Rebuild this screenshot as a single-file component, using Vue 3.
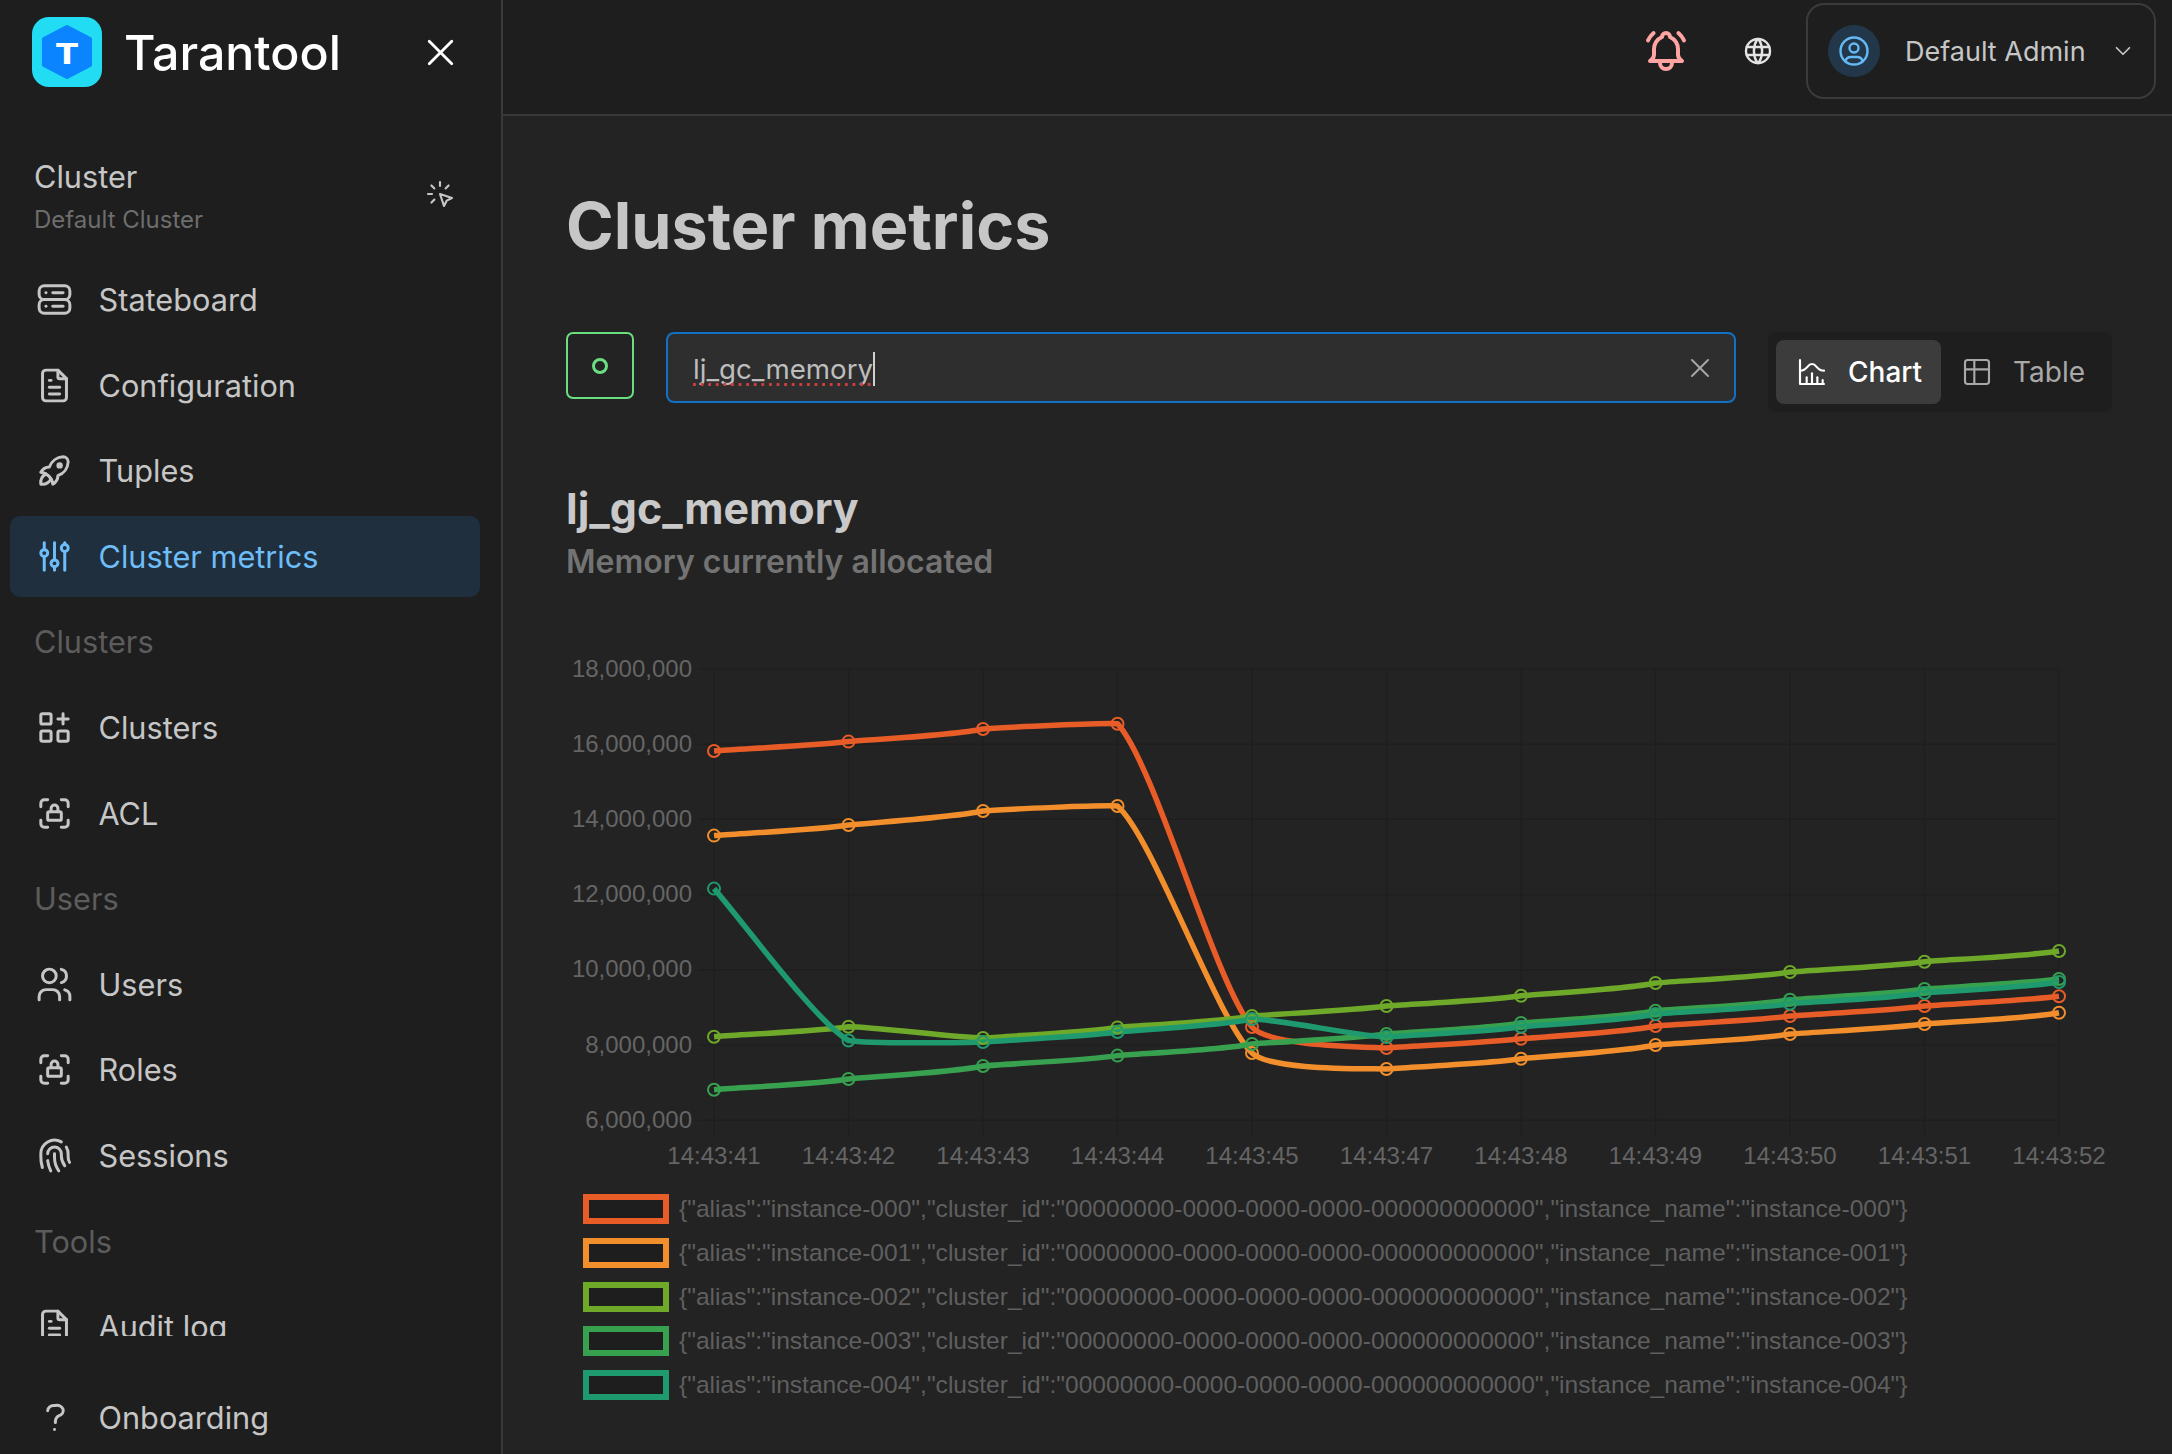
<template>
  <div class="app">
    <aside class="sidebar">
      <div class="brand">
        <svg class="logo" viewBox="0 0 70 70">
          <rect width="70" height="70" rx="17" fill="#21dcf2" />
          <polygon points="35,10 58,22 58,48 35,60 12,48 12,22" fill="#0a84ff" stroke="#0a84ff" stroke-width="4" stroke-linejoin="round" />
          <text x="35" y="47" text-anchor="middle" class="logo-t" textLength="24" lengthAdjust="spacingAndGlyphs">T</text>
        </svg>
        <span class="brand-name">Tarantool</span>
        <svg class="ico brand-x" viewBox="0 0 24 24"><path v-for="d in icons.x" :key="d" :d="d" /></svg>
      </div>

      <div class="cluster">
        <div>
          <div class="cluster-name">Cluster</div>
          <div class="cluster-sub">Default Cluster</div>
        </div>
        <svg class="ico cluster-ico" viewBox="0 0 24 24"><path v-for="d in icons.click" :key="d" :d="d" /></svg>
      </div>

      <nav class="nav">
        <template v-for="item in nav" :key="item.label + item.icon">
          <div v-if="!item.icon" class="nav-head">{{ item.label }}</div>
          <a v-else class="nav-item" :class="{ active: item.active }">
            <svg class="ico nav-ico" viewBox="0 0 24 24"><path v-for="d in icons[item.icon]" :key="d" :d="d" /></svg>
            <span>{{ item.label }}</span>
          </a>
        </template>
      </nav>

      <div class="side-foot">
        <a class="nav-item">
          <svg class="ico nav-ico" viewBox="0 0 24 24"><path v-for="d in icons.help" :key="d" :d="d" /></svg>
          <span>Onboarding</span>
        </a>
      </div>
    </aside>

    <div class="main">
      <header class="topbar">
        <svg class="ico bell" viewBox="0 0 24 24"><path v-for="d in icons.bell" :key="d" :d="d" /></svg>
        <svg class="ico globe" viewBox="0 0 24 24"><path v-for="d in icons.world" :key="d" :d="d" /></svg>
        <div class="user">
          <span class="avatar">
            <svg class="ico" viewBox="0 0 24 24"><path v-for="d in icons.user" :key="d" :d="d" /></svg>
          </span>
          <span class="user-name">Default Admin</span>
          <svg class="ico chev" viewBox="0 0 24 24"><path d="M6 9l6 6l6 -6" /></svg>
        </div>
      </header>

      <main class="content">
        <h1 class="title">Cluster metrics</h1>

        <div class="toolbar">
          <div class="status"><i></i></div>
          <div class="search">
            <span class="search-text">lj_gc_memory</span>
            <svg class="ico search-x" viewBox="0 0 24 24"><path v-for="d in icons.x" :key="d" :d="d" /></svg>
          </div>
          <div class="switch">
            <button class="switch-btn on">
              <svg class="ico" viewBox="0 0 24 24"><path v-for="d in icons.histogram" :key="d" :d="d" /></svg>
              Chart
            </button>
            <button class="switch-btn">
              <svg class="ico" viewBox="0 0 24 24"><path v-for="d in icons.table" :key="d" :d="d" /></svg>
              Table
            </button>
          </div>
        </div>

        <h2 class="metric">lj_gc_memory</h2>
        <div class="metric-sub">Memory currently allocated</div>

        <svg class="chart" viewBox="566 640 1540 540">
          <g class="grid">
            <line v-for="t in yTicks" :key="t.label" x1="699" :x2="xAt(10)" :y1="t.y" :y2="t.y" />
            <line v-for="(t, i) in times" :key="t" :x1="xAt(i)" :x2="xAt(i)" y1="669" y2="1136" />
          </g>
          <g class="labels">
            <text v-for="t in yTicks" :key="t.label" x="692" :y="t.y - 1" text-anchor="end">{{ t.label }}</text>
            <text v-for="(t, i) in times" :key="t" :x="xAt(i)" y="1155" text-anchor="middle">{{ t }}</text>
          </g>
          <g v-for="s in lines" :key="s.name">
            <path :d="s.d" :stroke="s.color" class="line" />
          </g>
          <g v-for="s in lines" :key="s.name">
            <circle v-for="(y, i) in s.ys" :key="i" :cx="xAt(i)" :cy="y" r="6" :stroke="s.color" class="dot" />
          </g>
        </svg>

        <ul class="legend">
          <li v-for="s in series" :key="s.name">
            <i :style="{ borderColor: s.color }"></i>
            <span>{"alias":"{{ s.name }}","cluster_id":"00000000-0000-0000-0000-000000000000","instance_name":"{{ s.name }}"}</span>
          </li>
        </ul>
      </main>
    </div>
  </div>
</template>

<script setup>
const icons = {
  x: ['M18 6l-12 12', 'M6 6l12 12'],
  click: ['M3 12l3 0', 'M12 3l0 3', 'M7.8 7.8l-2.2 -2.2', 'M16.2 7.8l2.2 -2.2', 'M7.8 16.2l-2.2 2.2', 'M12 12l9 3l-4 2l-2 4l-3 -9'],
  server: ['M3 7a3 3 0 0 1 3 -3h12a3 3 0 0 1 3 3v2a3 3 0 0 1 -3 3h-12a3 3 0 0 1 -3 -3z', 'M3 15a3 3 0 0 1 3 -3h12a3 3 0 0 1 3 3v2a3 3 0 0 1 -3 3h-12a3 3 0 0 1 -3 -3z', 'M7 8h.01', 'M7 16h.01', 'M11 8h6', 'M11 16h6'],
  file: ['M14 3v4a1 1 0 0 0 1 1h4', 'M17 21h-10a2 2 0 0 1 -2 -2v-14a2 2 0 0 1 2 -2h7l5 5v11a2 2 0 0 1 -2 2z', 'M9 9h1', 'M9 13h6', 'M9 17h6'],
  rocket: ['M4 13a8 8 0 0 1 7 7a6 6 0 0 0 3 -5a9 9 0 0 0 6 -8a3 3 0 0 0 -3 -3a9 9 0 0 0 -8 6a6 6 0 0 0 -5 3', 'M7 14a6 6 0 0 0 -3 6a6 6 0 0 0 6 -3', 'M14 9a1 1 0 1 0 2 0a1 1 0 1 0 -2 0'],
  sliders: ['M4 10a2 2 0 1 0 4 0a2 2 0 0 0 -4 0', 'M6 4v4', 'M6 12v8', 'M10 16a2 2 0 1 0 4 0a2 2 0 0 0 -4 0', 'M12 4v10', 'M12 18v2', 'M16 7a2 2 0 1 0 4 0a2 2 0 0 0 -4 0', 'M18 4v1', 'M18 9v11'],
  apps: ['M4 5a1 1 0 0 1 1 -1h4a1 1 0 0 1 1 1v4a1 1 0 0 1 -1 1h-4a1 1 0 0 1 -1 -1z', 'M4 15a1 1 0 0 1 1 -1h4a1 1 0 0 1 1 1v4a1 1 0 0 1 -1 1h-4a1 1 0 0 1 -1 -1z', 'M14 15a1 1 0 0 1 1 -1h4a1 1 0 0 1 1 1v4a1 1 0 0 1 -1 1h-4a1 1 0 0 1 -1 -1z', 'M14 7l6 0', 'M17 4l0 6'],
  lock: ['M4 8v-2a2 2 0 0 1 2 -2h2', 'M4 16v2a2 2 0 0 0 2 2h2', 'M16 4h2a2 2 0 0 1 2 2v2', 'M16 20h2a2 2 0 0 0 2 -2v-2', 'M8 12a1 1 0 0 1 1 -1h6a1 1 0 0 1 1 1v3a1 1 0 0 1 -1 1h-6a1 1 0 0 1 -1 -1z', 'M10 11v-2a2 2 0 1 1 4 0v2'],
  users: ['M5 7a4 4 0 1 0 8 0a4 4 0 1 0 -8 0', 'M3 21v-2a4 4 0 0 1 4 -4h4a4 4 0 0 1 4 4v2', 'M16 3.13a4 4 0 0 1 0 7.75', 'M21 21v-2a4 4 0 0 0 -3 -3.85'],
  finger: ['M18.9 7a8 8 0 0 1 1.1 5v1a6 6 0 0 0 .8 3', 'M8 11a4 4 0 0 1 8 0v1a10 10 0 0 0 2 6', 'M12 11v2a14 14 0 0 0 2.5 8', 'M8 15a18 18 0 0 0 1.8 6', 'M4.9 19a22 22 0 0 1 -.9 -7v-1a8 8 0 0 1 12 -6.95'],
  help: ['M8 8a3.5 3 0 0 1 3.5 -3h1a3.5 3 0 0 1 2 6a3 4 0 0 0 -2 4', 'M12 19l0 .01'],
  bell: ['M10 5a2 2 0 0 1 4 0a7 7 0 0 1 4 6v3a4 4 0 0 0 2 3h-16a4 4 0 0 0 2 -3v-3a7 7 0 0 1 4 -6', 'M9 17v1a3 3 0 0 0 6 0v-1', 'M21 6.727a11.05 11.05 0 0 0 -2.794 -3.727', 'M3 6.727a11.05 11.05 0 0 1 2.792 -3.727'],
  world: ['M3 12a9 9 0 1 0 18 0a9 9 0 0 0 -18 0', 'M3.6 9h16.8', 'M3.6 15h16.8', 'M11.5 3a17 17 0 0 0 0 18', 'M12.5 3a17 17 0 0 1 0 18'],
  user: ['M3 12a9 9 0 1 0 18 0a9 9 0 1 0 -18 0', 'M9 10a3 3 0 1 0 6 0a3 3 0 1 0 -6 0', 'M6.168 18.849a4 4 0 0 1 3.832 -2.849h4a4 4 0 0 1 3.834 2.855'],
  histogram: ['M3 3v18h18', 'M20 18v3', 'M16 16v5', 'M12 13v8', 'M8 16v5', 'M3 11c6 0 5 -5 9 -5s3 5 9 5'],
  table: ['M3 5a2 2 0 0 1 2 -2h14a2 2 0 0 1 2 2v14a2 2 0 0 1 -2 2h-14a2 2 0 0 1 -2 -2v-14z', 'M3 10h18', 'M10 3v18'],
}

const nav = [
  { label: 'Stateboard', icon: 'server' },
  { label: 'Configuration', icon: 'file' },
  { label: 'Tuples', icon: 'rocket' },
  { label: 'Cluster metrics', icon: 'sliders', active: true },
  { label: 'Clusters' },
  { label: 'Clusters', icon: 'apps' },
  { label: 'ACL', icon: 'lock' },
  { label: 'Users' },
  { label: 'Users', icon: 'users' },
  { label: 'Roles', icon: 'lock' },
  { label: 'Sessions', icon: 'finger' },
  { label: 'Tools' },
  { label: 'Audit log', icon: 'file' },
]

const times = ['14:43:41', '14:43:42', '14:43:43', '14:43:44', '14:43:45', '14:43:47', '14:43:48', '14:43:49', '14:43:50', '14:43:51', '14:43:52']

const yTicks = ['18,000,000', '16,000,000', '14,000,000', '12,000,000', '10,000,000', '8,000,000', '6,000,000'].map((label, i) => ({
  label,
  y: 669 + i * 75.2,
}))

const xAt = (i) => 714 + i * 134.5

// y values are pixels of the plot, read off the chart
const series = [
  { name: 'instance-000', color: '#e85c27', ys: [751, 741.6, 729, 723.7, 1027, 1048, 1038.7, 1026, 1016, 1006, 996.3] },
  { name: 'instance-001', color: '#f28f2c', ys: [835.6, 825, 811, 806, 1053, 1069, 1058.7, 1045, 1034, 1024, 1012.7] },
  { name: 'instance-002', color: '#6ea92a', ys: [1036.7, 1026.7, 1038, 1027.4, 1016, 1006, 995.7, 983, 972, 961.7, 951] },
  { name: 'instance-003', color: '#38a14f', ys: [1089.7, 1079, 1066, 1055.6, 1044, 1034, 1023, 1010.7, 999.7, 989, 979] },
  { name: 'instance-004', color: '#1f9a6e', ys: [888.6, 1040.5, 1042, 1032, 1019, 1037, 1026.7, 1014, 1003.7, 993, 982] },
]

const clamp = (v, a, b) => Math.min(Math.max(v, Math.min(a, b)), Math.max(a, b))

function smoothPath(ys) {
  const pts = ys.map((y, i) => [xAt(i), y])
  const k = 0.2
  const cps = pts.map((p, i) => {
    const prev = pts[i - 1] || p
    const next = pts[i + 1] || p
    const lenP = Math.hypot(p[0] - prev[0], p[1] - prev[1])
    const lenN = Math.hypot(next[0] - p[0], next[1] - p[1])
    const r = lenN / (lenP + lenN)
    const vx = (next[0] - prev[0]) * k
    const vy = (next[1] - prev[1]) * k
    return {
      in: [clamp(p[0] - vx * (1 - r), prev[0], p[0]), clamp(p[1] - vy * (1 - r), prev[1] - 6, p[1] + 6)],
      out: [clamp(p[0] + vx * r, p[0], next[0]), clamp(p[1] + vy * r, p[1] - 2, next[1] + 2)],
    }
  })
  let d = `M${pts[0][0]} ${pts[0][1]}`
  for (let i = 1; i < pts.length; i++) {
    const a = cps[i - 1].out
    const b = cps[i].in
    d += `C${a[0].toFixed(1)} ${a[1].toFixed(1)} ${b[0].toFixed(1)} ${b[1].toFixed(1)} ${pts[i][0]} ${pts[i][1]}`
  }
  return d
}

const lines = series.map((s) => ({ ...s, d: smoothPath(s.ys) }))
</script>

<style scoped>
.app {
  display: flex;
  width: 2172px;
  height: 1454px;
  overflow: hidden;
  background: #232323;
  color: #c6c6c6;
  font-family: Inter, "Noto Sans", sans-serif;
}

.ico {
  fill: none;
  stroke: currentColor;
  stroke-width: 1.6;
  stroke-linecap: round;
  stroke-linejoin: round;
  flex: none;
}

.sidebar {
  width: 503px;
  flex: none;
  box-sizing: border-box;
  display: flex;
  flex-direction: column;
  background: #1e1e1e;
  border-right: 2px solid #393939;
}

.brand {
  height: 104px;
  flex: none;
  display: flex;
  align-items: center;
  padding-left: 32px;
}
.logo {
  width: 70px;
  height: 70px;
  flex: none;
}
.logo-t {
  font: 800 29px Inter, sans-serif;
  fill: #fff;
}
.brand-name {
  margin-left: 22px;
  font-size: 48.3px;
  font-weight: 500;
  color: #fff;
}
.brand-x {
  width: 45px;
  height: 45px;
  margin-left: auto;
  margin-right: 38px;
  color: #fff;
  stroke-width: 1.5;
}

.cluster {
  height: 155px;
  flex: none;
  box-sizing: border-box;
  display: flex;
  align-items: center;
  justify-content: space-between;
  padding: 28px 45px 0 34px;
}
.cluster-name {
  font-size: 30.7px;
  line-height: 44px;
}
.cluster-sub {
  font-size: 24px;
  line-height: 34px;
  margin-top: 4px;
  color: #6d6d6d;
}
.cluster-ico {
  width: 32px;
  height: 32px;
  margin-top: -4px;
}

.nav {
  height: 1077px;
  flex: none;
  overflow: hidden;
  display: flex;
  flex-direction: column;
  gap: 4.6px;
}
.nav-head {
  height: 81px;
  flex: none;
  padding-left: 34px;
  display: flex;
  align-items: center;
  font-size: 30.7px;
  color: #5c5c5c;
}
.nav-item {
  height: 81px;
  flex: none;
  margin: 0 21px 0 10px;
  padding-left: 23.5px;
  display: flex;
  align-items: center;
  gap: 24px;
  border-radius: 10px;
  font-size: 30.7px;
}
.nav-item.active {
  background: #1f2f3d;
  color: #6ebdf8;
}
.nav-ico {
  width: 41px;
  height: 41px;
  stroke-width: 1.75;
}
.side-foot {
  flex: none;
  height: 118px;
  padding-top: 40.5px;
  box-sizing: border-box;
}

.main {
  flex: 1;
  min-width: 0;
  display: flex;
  flex-direction: column;
}

.topbar {
  height: 116px;
  box-sizing: border-box;
  flex: none;
  display: flex;
  align-items: flex-start;
  justify-content: flex-end;
  padding: 3px 16px 0 0;
  background: #1e1e1e;
  border-bottom: 2px solid #393939;
}
.bell {
  width: 48px;
  height: 48px;
  margin-top: 24px;
  color: #ffa3a3;
  stroke-width: 2;
}
.globe {
  width: 32px;
  height: 32px;
  margin: 32px 32px 0 52px;
  color: #e4e4e4;
  stroke-width: 1.8;
}
.user {
  width: 350px;
  height: 96px;
  box-sizing: border-box;
  display: flex;
  align-items: center;
  padding-left: 20px;
  border: 2px solid #3b3b3b;
  border-radius: 18px;
}
.avatar {
  width: 52px;
  height: 52px;
  flex: none;
  display: flex;
  align-items: center;
  justify-content: center;
  border-radius: 50%;
  background: #22384a;
  color: #64b8f4;
}
.avatar .ico {
  width: 36px;
  height: 36px;
}
.user-name {
  margin-left: 25px;
  font-size: 27px;
}
.chev {
  width: 26px;
  height: 26px;
  margin-left: 24px;
}

.content {
  flex: 1;
  padding: 72px 60px 0 63px;
  min-width: 0;
}
.title {
  margin: 0;
  font-size: 64.6px;
  line-height: 76px;
  font-weight: 700;
  color: #c6c6c6;
}

.toolbar {
  display: flex;
  align-items: flex-start;
  gap: 32px;
  margin-top: 68px;
}
.status {
  width: 68px;
  height: 67px;
  box-sizing: border-box;
  flex: none;
  display: flex;
  align-items: center;
  justify-content: center;
  border: 2px solid #6ade80;
  border-radius: 7px;
}
.status i {
  width: 16px;
  height: 16px;
  box-sizing: border-box;
  border: 3.5px solid #6ade80;
  border-radius: 50%;
}
.search {
  flex: 1;
  height: 71px;
  box-sizing: border-box;
  display: flex;
  align-items: center;
  padding: 0 18px 0 25px;
  background: #2e2e2e;
  border: 2px solid #1271c4;
  border-radius: 8px;
}
.search-text {
  position: relative;
  font-size: 27.7px;
  line-height: 34px;
  color: #bdbdbd;
  border-right: 2px solid #d0d0d0;
  margin-top: 2px;
}
.search-text::after {
  content: "";
  position: absolute;
  left: 0;
  right: 0;
  bottom: 0;
  height: 3px;
  background: radial-gradient(circle at 1.5px 1.5px, #d23c3c 1.4px, transparent 1.6px) 0 0 / 7.6px 3px repeat-x;
}
.search-x {
  width: 32px;
  height: 32px;
  margin-left: auto;
  color: #a8a8a8;
  stroke-width: 1.4;
}
.switch {
  display: flex;
  flex: none;
  width: 344px;
  height: 80px;
  box-sizing: border-box;
  padding: 8px;
  background: #1e1e1e;
  border-radius: 8px;
}
.switch-btn {
  flex: none;
  width: 164px;
  height: 64px;
  display: flex;
  align-items: center;
  gap: 20px;
  padding: 0 0 0 20px;
  border: 0;
  border-radius: 8px;
  background: transparent;
  font: 400 28px Inter, sans-serif;
  color: #a9a9a9;
}
.switch-btn.on {
  width: 165px;
  background: #3c3c3c;
  color: #fff;
  font-weight: 500;
}
.switch-btn .ico {
  width: 32px;
  height: 32px;
}

.metric {
  margin: 72px 0 0;
  font-size: 43px;
  line-height: 48px;
  font-weight: 700;
  color: #c9c9c9;
}
.metric-sub {
  margin-top: 10px;
  font-size: 32px;
  line-height: 40px;
  font-weight: 600;
  color: #737373;
}

.chart {
  display: block;
  width: 1540px;
  height: 540px;
  margin-top: 58px;
}
.grid line {
  stroke: #1e1e1e;
  stroke-width: 1.2;
}
.labels text {
  font: 24px "Liberation Sans", Arial, sans-serif;
  fill: #656565;
  dominant-baseline: central;
}
.line {
  fill: none;
  stroke-width: 5.5;
  stroke-linejoin: round;
}
.dot {
  fill: none;
  stroke-width: 2;
}

.legend {
  list-style: none;
  margin: 14px 0 0;
  padding: 0 0 0 17px;
  display: flex;
  flex-direction: column;
  gap: 14px;
  font: 24.57px "Liberation Sans", Arial, sans-serif;
  color: #5f5f5f;
}
.legend li {
  display: flex;
  align-items: center;
  gap: 10px;
  height: 30px;
}
.legend i {
  width: 86px;
  height: 30px;
  box-sizing: border-box;
  flex: none;
  background: #1e1e1e;
  border: 6px solid;
}
</style>

<style>
html, body {
  margin: 0;
  background: #232323;
}
</style>
